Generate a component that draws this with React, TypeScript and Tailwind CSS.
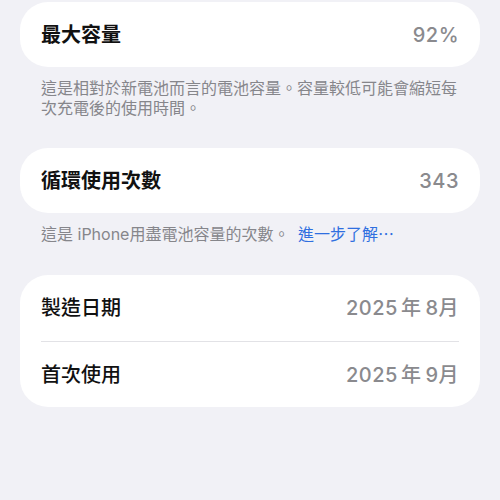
import React from "react";

const font = { fontFamily: '"Inter", "Noto Sans CJK TC", sans-serif' };

function Row({ label, value, bold }: { label: string; value: string; bold?: boolean }) {
  return (
    <div className="flex h-[65px] items-center justify-between">
      <span className={`text-[20px] leading-none text-[#111111] ${bold ? "font-semibold" : "font-medium"}`}>{label}</span>
      <span className="text-[20px] leading-none text-[#8a8a8e] font-medium tracking-[0.5px]">{value}</span>
    </div>
  );
}

export default function App() {
  return (
    <div className="min-h-[500px] w-full bg-[#f1f1f6] px-5 pt-[2px]" style={font}>
      <div className="rounded-[28px] bg-white px-[21px]">
        <Row label="最大容量" value="92%" bold />
      </div>
      <p className="mt-[11px] px-[21px] text-[16px] leading-[20px] text-[#86868b]">
        這是相對於新電池而言的電池容量。容量較低可能會縮短每
        <br />
        次充電後的使用時間。
      </p>
      <div className="mt-[30px] rounded-[28px] bg-white px-[21px]">
        <Row label="循環使用次數" value="343" bold />
      </div>
      <p className="mt-[11px] px-[21px] text-[16px] leading-[20px] text-[#86868b]">
        這是 iPhone用盡電池容量的次數。 <span className="ml-1 text-[#2f6fe0]">進一步了解⋯</span>
      </p>
      <div className="mt-[31px] rounded-[28px] bg-white px-[21px]">
        <div className="flex h-[66px] items-center justify-between">
          <span className="text-[20px] leading-none font-medium text-[#111111]">製造日期</span>
          <span className="text-[20px] leading-none font-medium text-[#8a8a8e] tracking-[0.5px]">2025<span className="ml-[3px]">年</span><span className="ml-[4px]">8</span>月</span>
        </div>
        <div className="h-px bg-[#e2e2e6]" />
        <div className="flex h-[65px] items-center justify-between">
          <span className="text-[20px] leading-none font-medium text-[#111111]">首次使用</span>
          <span className="text-[20px] leading-none font-medium text-[#8a8a8e] tracking-[0.5px]">2025<span className="ml-[3px]">年</span><span className="ml-[4px]">9</span>月</span>
        </div>
      </div>
    </div>
  );
}
